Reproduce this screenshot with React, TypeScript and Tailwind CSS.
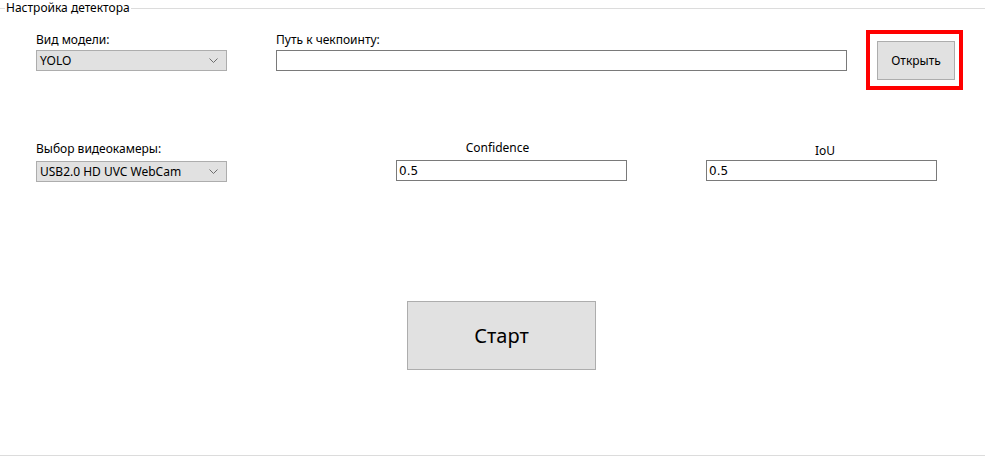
import React from "react";

const seg = { fontFamily: '"Noto Sans", "Open Sans", sans-serif' };
const tah = { fontFamily: '"DejaVu Sans", Verdana, sans-serif' };

function Combo({ value }: { value: string }) {
  return (
    <div className="h-[21px] w-full border border-[#adadad] bg-[#e1e1e1] flex items-center pl-[3px] pr-[8px] text-[12px] text-black" style={seg}>
      <span className="flex-1 leading-[14px]">{value}</span>
      <svg width="9" height="5" viewBox="0 0 9 5" className="shrink-0">
        <path d="M0.5 0.5 L4.5 4.5 L8.5 0.5" fill="none" stroke="#6d6d6d" strokeWidth="1" />
      </svg>
    </div>
  );
}

function TextInput({ value }: { value?: string }) {
  return (
    <div className="h-[21px] w-full border border-[#7a7a7a] bg-white flex items-center pl-[2px] text-[12px] text-black" style={tah}>
      {value}
    </div>
  );
}

export default function App() {
  return (
    <div className="w-[985px] h-[457px] bg-white overflow-hidden">
      <div className="relative mt-[8px] h-[448px] border-t border-b border-[#dcdcdc]">
        <div className="absolute left-[5px] top-[-9px] bg-white px-[1px] text-[12px] leading-[16px] text-black" style={seg}>
          Настройка детектора
        </div>

        {/* Row 1 */}
        <div className="mt-[21px] h-[60px] flex pl-[36px]">
          <div className="w-[191px] pt-[3px]">
            <div className="h-[14px] leading-[14px] text-[12px] text-black" style={seg}>Вид модели:</div>
            <div className="mt-[3px]"><Combo value="YOLO" /></div>
          </div>
          <div className="ml-[49px] w-[571px] pt-[3px]">
            <div className="h-[14px] leading-[14px] text-[12px] text-black" style={seg}>Путь к чекпоинту:</div>
            <div className="mt-[3px]"><TextInput /></div>
          </div>
          <div className="ml-[19px] w-[97px] h-[60px] border-4 border-[#ff0000] pt-[7px] pl-[7px]">
            <div className="w-[78px] h-[39px] border border-[#adadad] bg-[#e1e1e1] flex items-center justify-center text-[12px] text-black" style={seg}>
              Открыть
            </div>
          </div>
        </div>

        {/* Row 2 */}
        <div className="mt-[50px] h-[42px] flex pl-[36px]">
          <div className="w-[191px] pt-[2px]">
            <div className="h-[14px] leading-[14px] text-[12px] text-black" style={seg}>Выбор видеокамеры:</div>
            <div className="mt-[5px]"><Combo value="USB2.0 HD UVC WebCam" /></div>
          </div>
          <div className="ml-[169px] w-[231px] pt-[1px]">
            <div className="h-[14px] leading-[14px] text-[12px] text-black text-center pr-[28px]" style={seg}>Confidence</div>
            <div className="mt-[5px]"><TextInput value="0.5" /></div>
          </div>
          <div className="ml-[79px] w-[231px] pt-[4px]">
            <div className="h-[14px] leading-[14px] text-[12px] text-black text-center pl-[7px]" style={seg}>IoU</div>
            <div className="mt-[2px]"><TextInput value="0.5" /></div>
          </div>
        </div>

        {/* Row 3 */}
        <div className="mt-[119px] pl-[407px]">
          <div className="w-[189px] h-[69px] border border-[#adadad] bg-[#e1e1e1] flex items-center justify-center text-[20px] text-black" style={seg}>
            Старт
          </div>
        </div>
      </div>
    </div>
  );
}
